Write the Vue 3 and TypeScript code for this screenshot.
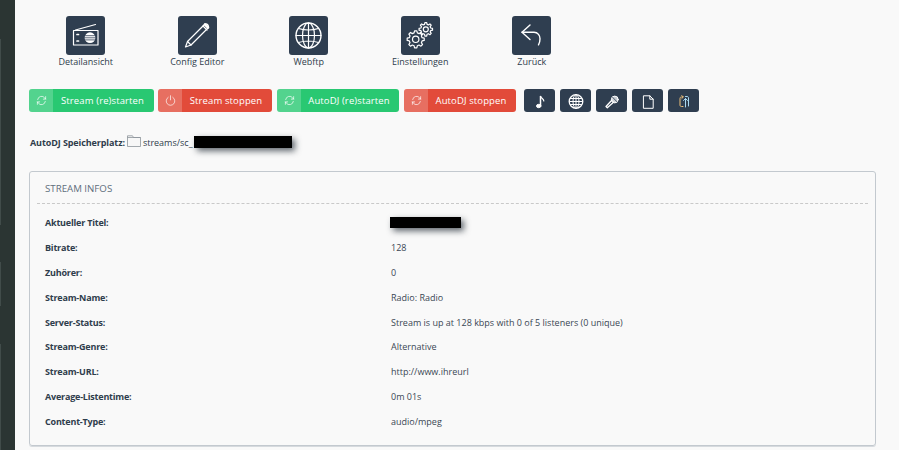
<script setup lang="ts">
function gear(cx: number, cy: number, rOut: number, rIn: number, teeth: number): string {
  const pts: string[] = []
  const step = (Math.PI * 2) / teeth
  for (let i = 0; i < teeth; i++) {
    const a = i * step - Math.PI / 2
    const seq: [number, number][] = [
      [rIn, a - step * 0.32],
      [rOut, a - step * 0.17],
      [rOut, a + step * 0.17],
      [rIn, a + step * 0.32],
    ]
    for (const [r, t] of seq) {
      pts.push(`${(cx + r * Math.cos(t)).toFixed(2)} ${(cy + r * Math.sin(t)).toFixed(2)}`)
    }
  }
  return 'M' + pts.join('L') + 'Z'
}
const bigGear = gear(14.7, 23.3, 8.6, 6.6, 8)
const smallGear = gear(24.8, 13.3, 6.8, 5.1, 8)

const tiles = [
  { label: 'Detailansicht', id: 'radio' },
  { label: 'Config Editor', id: 'pencil' },
  { label: 'Webftp', id: 'globe' },
  { label: 'Einstellungen', id: 'gears' },
  { label: 'Zurück', id: 'back' },
]
const actions = [
  { label: 'Stream (re)starten', color: 'green', icon: 'sync', width: 125 },
  { label: 'Stream stoppen', color: 'red', icon: 'power', width: 114 },
  { label: 'AutoDJ (re)starten', color: 'green', icon: 'sync', width: 122 },
  { label: 'AutoDJ stoppen', color: 'red', icon: 'sync', width: 112 },
]
const tools = ['music', 'globe', 'mic', 'file', 'swap']
const rows = [
  ['Aktueller Titel:', ''],
  ['Bitrate:', '128'],
  ['Zuhörer:', '0'],
  ['Stream-Name:', 'Radio: Radio'],
  ['Server-Status:', 'Stream is up at 128 kbps with 0 of 5 listeners (0 unique)'],
  ['Stream-Genre:', 'Alternative'],
  ['Stream-URL:', 'http://www.ihreurl'],
  ['Average-Listentime:', '0m 01s'],
  ['Content-Type:', 'audio/mpeg'],
]
</script>

<template>
  <div class="page">
    <aside class="rail"></aside>
    <main class="main">
      <section class="tiles">
        <a v-for="t in tiles" :key="t.id" class="tile">
          <span class="tile-box">
            <svg viewBox="0 0 39 39" width="39" height="39" fill="none" stroke="#fff" stroke-width="1.2" stroke-linecap="round" stroke-linejoin="round">
              <template v-if="t.id === 'radio'">
                <rect x="7.500" y="14.500" width="24.500" height="14.500" />
                <path d="M9.500 14 29.500 8.500" />
                <circle cx="24" cy="21.700" r="5.400" fill="#fff" stroke="none" />
                <path d="M18.500 19.700h11M18.500 21.800h11M18.500 23.900h11" stroke="#2f3e50" stroke-width=".8" />
                <path d="M11 18.500h1.500M11 25h1.500" stroke-width="1.700" />
              </template>
              <template v-else-if="t.id === 'pencil'">
                <path d="M9.500 25.500 26.500 8.500a2.500 2.500 0 0 1 3.500 3.500L13 29l-5.500 2z" />
                <path d="M25 10l4 4M9.500 25.500 13 29" />
                <path d="M27 8.500 30 11.500" stroke-width="2.600" />
              </template>
              <template v-else-if="t.id === 'globe'">
                <circle cx="19.500" cy="19.500" r="12.500" stroke-width="1.400" />
                <ellipse cx="19.500" cy="19.500" rx="6" ry="12.500" />
                <path d="M19.500 7v25M7 19.500h25M9.500 12.500q10 3 20 0M9.500 26.500q10-3 20 0" />
              </template>
              <template v-else-if="t.id === 'gears'">
                <path :d="bigGear" />
                <circle cx="14.700" cy="23.300" r="3.200" />
                <path :d="smallGear" />
                <circle cx="24.800" cy="13.300" r="2.500" />
              </template>
              <template v-else>
                <path d="M10 16.300h12c4 0 6 3.500 6 6.500 0 2.500-.5 4.500-1.500 6" stroke-width="1.400" />
                <path d="M18 9 10 16.300 18 23.500" stroke-width="1.400" />
              </template>
            </svg>
          </span>
          <span class="tile-label">{{ t.label }}</span>
        </a>
      </section>

      <section class="actions">
        <button v-for="a in actions" :key="a.label" class="action" :class="a.color" :style="{ width: a.width + 'px' }">
          <span class="action-icon">
            <svg viewBox="0 0 12 12" width="11" height="11" fill="none" stroke="#fff" stroke-opacity=".75" stroke-width="1" stroke-linecap="round">
              <template v-if="a.icon === 'sync'">
                <path d="M1.800 5A4.300 4.300 0 0 1 9.500 3.200L10.500 4.500M10.500 1.800v2.700H8" />
                <path d="M10.200 7A4.300 4.300 0 0 1 2.500 8.800L1.500 7.500M1.500 10.200V7.500H4" />
              </template>
              <template v-else>
                <path d="M3.500 2.500a4.700 4.700 0 1 0 5 0M6 .8v4.500" />
              </template>
            </svg>
          </span>
          <span class="action-text">{{ a.label }}</span>
        </button>

        <div class="tools">
          <button v-for="t in tools" :key="t" class="tool">
            <svg viewBox="0 0 16 16" width="16" height="16" fill="none" stroke="#fff" stroke-width="1" stroke-linecap="round" stroke-linejoin="round">
              <template v-if="t === 'music'">
                <path d="M8.500 3.500v9" stroke-width="1.500" />
                <path d="M8.800 3.500c.4 2 3 2.300 3 4.500" stroke-width="1.200" />
                <ellipse cx="6.700" cy="13" rx="2.200" ry="1.700" fill="#fff" />
              </template>
              <template v-else-if="t === 'globe'">
                <circle cx="8" cy="8.500" r="6.800" stroke-width="1.300" />
                <ellipse cx="8" cy="8.500" rx="3" ry="6.800" />
                <path d="M2.500 5.500h11M1.500 8.500h13M2.500 11.500h11M8 2v13" />
              </template>
              <template v-else-if="t === 'mic'">
                <circle cx="10.800" cy="6.500" r="3.400" fill="#c9ced4" />
                <path d="M8.500 4.200 13 8.800" stroke="#2f3e50" stroke-width=".8" />
                <path d="M8 7 2 13.500l1.300 1.300L9.800 9" stroke-width="1.300" />
              </template>
              <template v-else-if="t === 'file'">
                <path d="M3.800 2.800h6l3.400 3.400v9.100H3.800zM9.800 2.800v3.400h3.400" />
              </template>
              <template v-else>
                <path d="M7 4H5.500C4.500 4 4 4.500 4 5.500v6.500c0 1 .5 1.500 1.500 1.500H7" stroke="#f0c27a" />
                <path d="M5.800 2.500 7.300 4 5.800 5.500" stroke="#f0c27a" />
                <path d="M9.500 14V5.500M7.500 7.500l2-2 2 2" stroke="#a8d8f0" />
                <path d="M9.500 3.500h1.500c1 0 1.500.5 1.500 1.500v8" stroke="#a8d8f0" />
              </template>
            </svg>
          </button>
        </div>
      </section>

      <p class="storage">
        <strong>AutoDJ Speicherplatz:</strong>
        <svg class="folder" viewBox="0 0 14 12" width="14" height="12" fill="#f7f7f7" stroke="#8d949a" stroke-width=".8">
          <path d="M.5 11.500V.8h5l1 1.700h7v9z" />
          <path d="M.5 2.500h13" />
        </svg>
        <span class="path">streams/sc_</span>
        <span class="redact redact-path"></span>
      </p>

      <section class="panel">
        <h2 class="panel-title">STREAM INFOS</h2>
        <div class="info-list">
          <div v-for="r in rows" :key="r[0]" class="info-row">
            <strong>{{ r[0] }}</strong>
            <span v-if="r[1]">{{ r[1] }}</span>
            <span v-else class="redact redact-title"></span>
          </div>
        </div>
      </section>
    </main>
  </div>
</template>

<style>
html, body { margin: 0; background: #f9f9f9; overflow: hidden; }
</style>

<style scoped>
.page {
  display: flex;
  width: 899px;
  height: 450px;
  overflow: hidden;
  background: #f9f9f9;
  color: #2f3d4c;
  font-family: "Open Sans", "Noto Sans", sans-serif;
  font-size: 9px;
}
.rail {
  width: 15px;
  flex: none;
  background:
    linear-gradient(#2b3533 39px, #414c4a 39px, #414c4a 225px, #2b3533 225px, #2b3533 262px, #414c4a 262px, #414c4a 306px, #2b3533 306px, #2b3533 344px, #414c4a 344px) left top / 1px 100% no-repeat,
    #2b3533;
}
.main { flex: 1; padding: 16px 23px 0 14px; min-width: 0; }
.tiles { display: flex; padding-left: 1px; height: 73px; }
.tile { width: 111.500px; display: flex; flex-direction: column; align-items: center; color: #2f3d4c; }
.tile-box { width: 39px; height: 39px; border-radius: 3px; background: #2f3e50; display: block; }
.tile-box svg { display: block; }
.tile-label { line-height: 13px; white-space: nowrap; }
.actions { display: flex; height: 23px; gap: 4px; }
.action {
  display: flex;
  align-items: stretch;
  height: 23px;
  padding: 0;
  border: 0;
  border-radius: 3px;
  color: #fff;
  font: 9.500px "Open Sans", sans-serif;
  letter-spacing: .12px;
  overflow: hidden;
}
.action:nth-child(2) { margin-right: 1px; }
.action:nth-child(3) { margin-right: 1px; }
.action.green { background: #29c872; }
.action.red { background: #e24b3a; }
.action-icon {
  width: 24px;
  flex: none;
  display: flex;
  align-items: center;
  justify-content: center;
  background: rgba(255, 255, 255, .2);
}
.action-text { flex: 1; display: flex; align-items: center; justify-content: center; white-space: nowrap; padding-right: 2px; }
.tools { display: flex; gap: 5px; margin-left: 4px; }
.tool {
  width: 31px;
  height: 23px;
  padding: 0;
  border: 0;
  border-radius: 3px;
  background: #2f3e50;
  display: flex;
  align-items: center;
  justify-content: center;
}
.storage {
  display: flex;
  align-items: center;
  margin: 21px 0 0;
  height: 18px;
  color: #2f3d4c;
}
.storage strong { font-weight: 700; letter-spacing: -.1px; margin-left: 1px; }
.folder { margin: -3px 2px 0 2px; }
.redact { background: #000; box-shadow: 3px 3px 6px rgba(30, 40, 50, .7); display: block; }
.redact-path { width: 98px; height: 12px; margin-left: 1px; }
.redact-title { width: 71px; height: 11px; margin-left: -1px; }
.panel {
  margin-top: 20px;
  height: 275px;
  box-sizing: border-box;
  border: 1px solid #c3c9cf;
  border-radius: 3px;
  padding: 0 7px;
  box-shadow: 0 1px 0 #d6dade;
}
.panel-title {
  margin: 0;
  padding: 11px 8px 8px;
  font-size: 9.700px;
  line-height: 12px;
  font-weight: 400;
  color: #5f6e7c;
  border-bottom: 1px dashed #c9c9c9;
}
.info-list { padding: 6px 8px 0; }
.info-row {
  display: grid;
  grid-template-columns: 346px 1fr;
  align-items: center;
  height: 24.900px;
  color: #3a4754;
}
.info-row strong { font-weight: 700; letter-spacing: -.2px; color: #2f3d4c; }
</style>
